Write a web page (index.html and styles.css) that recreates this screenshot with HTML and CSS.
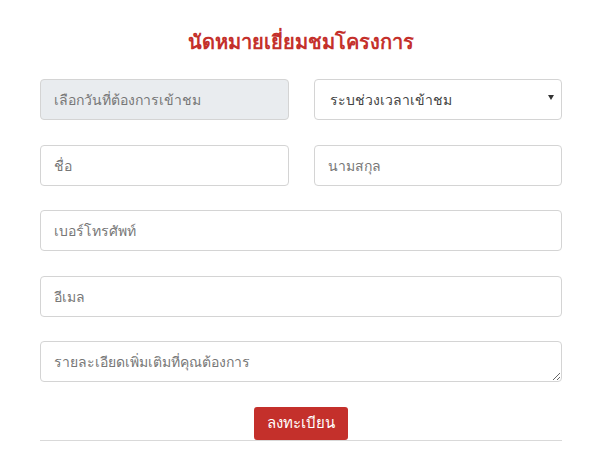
FILE: index.html
```html
<!DOCTYPE html>
<html lang="th">
<head>
<meta charset="utf-8">
<link rel="stylesheet" href="styles.css">
</head>
<body>
<div class="wrap">
  <h1 class="title">นัดหมายเยี่ยมชมโครงการ</h1>
  <form class="form">
    <div class="row two">
      <input class="field readonly" type="text" placeholder="เลือกวันที่ต้องการเข้าชม" readonly>
      <div class="select">
        <span>ระบช่วงเวลาเข้าชม</span>
        <span class="caret"></span>
      </div>
    </div>
    <div class="row two">
      <input class="field" type="text" placeholder="ชื่อ">
      <input class="field" type="text" placeholder="นามสกุล">
    </div>
    <div class="row">
      <input class="field" type="text" placeholder="เบอร์โทรศัพท์">
    </div>
    <div class="row">
      <input class="field" type="text" placeholder="อีเมล">
    </div>
    <div class="row">
      <textarea class="field area" placeholder="รายละเอียดเพิ่มเติมที่คุณต้องการ"></textarea>
    </div>
    <div class="actions">
      <button type="button" class="btn">ลงทะเบียน</button>
    </div>
  </form>
</div>
</body>
</html>
```

FILE: styles.css
```css
* { box-sizing: border-box; }
body {
  margin: 0;
  background: #fff;
  font-family: "Noto Sans", "DejaVu Sans", sans-serif;
  color: #555;
}
.wrap {
  width: 522px;
  margin: 0 0 0 40px;
  border-bottom: 1px solid #d9d9d9;
}
.title {
  margin: 0;
  padding-top: 26px;
  height: 79px;
  text-align: center;
  font-size: 20px;
  font-weight: 700;
  color: #c4302b;
}
.form { display: flex; flex-direction: column; }
.row { display: flex; margin-bottom: 24.5px; height: 41px; }
.row.two { display: grid; grid-template-columns: 1fr 1fr; gap: 25px; }
.field, .select {
  width: 100%;
  height: 41px;
  border: 1px solid #d4d4d4;
  border-radius: 4px;
  background: #fff;
  padding: 0 13px;
  font-family: inherit;
  font-size: 14px;
  color: #555;
  outline: none;
}
.field::placeholder { color: #777; }
.readonly { background: #e9ecef; }
.select {
  display: flex;
  align-items: center;
  justify-content: space-between;
  padding: 0 7px 0 15px;
  color: #444;
}
.caret {
  width: 0; height: 0;
  border-left: 3px solid transparent;
  border-right: 3px solid transparent;
  border-top: 5px solid #333;
  margin-top: -4px;
}
.area {
  resize: vertical;
  padding-top: 10px;
  line-height: 20px;
}
.actions { display: flex; justify-content: center; }
.btn {
  width: 94px;
  height: 33px;
  border: 0;
  border-radius: 3px;
  background: #c4302b;
  color: #fff;
  font-family: inherit;
  font-size: 15px;
  padding: 0;
  margin: 0;
  display: block;
}
```
